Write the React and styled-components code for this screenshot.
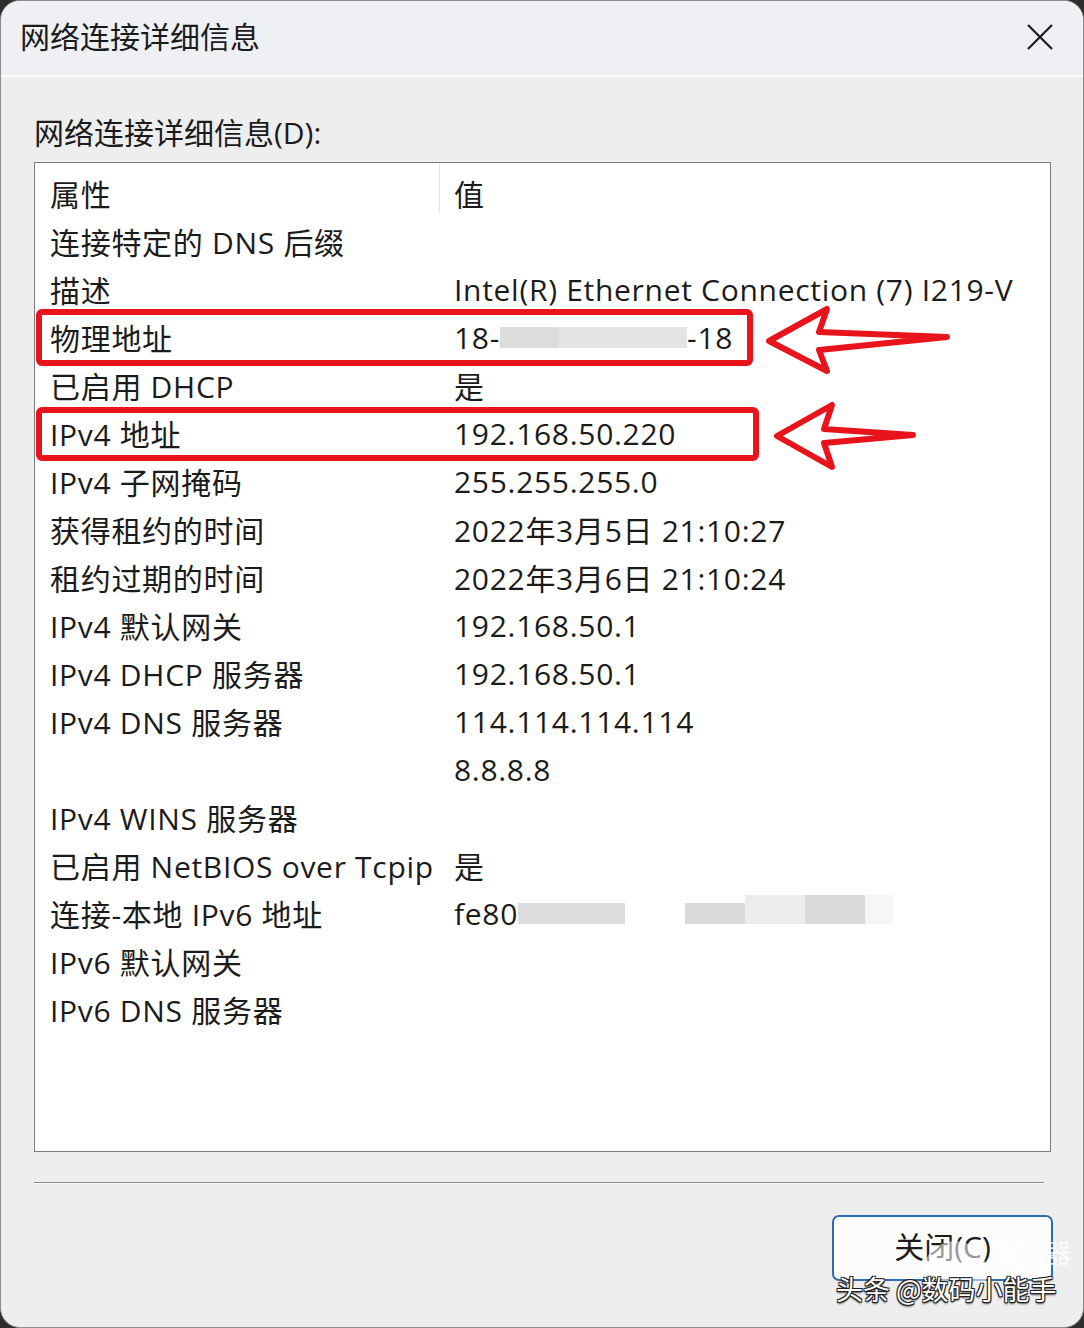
import React from 'react'
import styled, { createGlobalStyle } from 'styled-components'

const GlobalStyle = createGlobalStyle`
  body {
    margin: 0;
    background: #2e2e2e;
    font-family: "Open Sans", "Noto Sans CJK SC", sans-serif;
    color: #1b1b1b;
  }
`

const Window = styled.div`
  position: relative;
  width: 1084px;
  height: 1328px;
  box-sizing: border-box;
  background: #eeeeee;
  border: 1px solid #8c8c8c;
  border-radius: 20px;
  overflow: hidden;
  display: flex;
  flex-direction: column;
`

const TitleBar = styled.div`
  height: 74px;
  flex: none;
  background: #eef0f4;
  border-bottom: 2px solid #fbfbfb;
  display: flex;
  align-items: center;
  justify-content: space-between;
  padding: 0 30px 0 19px;
`

const Title = styled.div`
  font-size: 30px;
  line-height: 1;
  margin-top: -2px;
`

const CloseIcon = styled.svg`
  width: 26px;
  height: 26px;
  margin-top: -2px;
`

const Body = styled.div`
  flex: 1;
  display: flex;
  flex-direction: column;
  padding: 0 32px 0 33px;
`

const GroupLabel = styled.div`
  font-size: 30px;
  line-height: 48px;
  margin-top: 32px;
  margin-bottom: 5px;
`

const ListBox = styled.div`
  height: 990px;
  box-sizing: border-box;
  background: #fff;
  border: 1px solid #7b7b7b;
`

const Row = styled.div`
  display: grid;
  grid-template-columns: 405px 1fr;
  height: ${p => (p.$header ? '54px' : '48px')};
  font-size: 30px;
  letter-spacing: 0.7px;
  white-space: nowrap;
`

const Cell = styled.div`
  position: relative;
  display: flex;
  align-items: center;
  padding-left: ${p => (p.$value ? '14px' : '15px')};
  padding-top: ${p => (p.$head ? '6px' : '0')};

  ${p => p.$divider && `
    &::after {
      content: '';
      position: absolute;
      right: 0;
      top: 0;
      bottom: 4px;
      width: 1px;
      background: #e6e6e6;
    }
  `}
`

const Mask = styled.span`
  display: inline-block;
  width: ${p => p.$w}px;
  height: ${p => p.$h || 21}px;
  background: ${p => p.$c || '#dedede'};
`

const MaskGroup = styled.span`
  display: inline-flex;
  align-items: flex-end;
  margin-left: ${p => p.$gap || 0}px;
  height: 30px;
  padding-bottom: 4px;
  box-sizing: border-box;
`

const Separator = styled.div`
  height: 1px;
  background: #8a8a8a;
  border-bottom: 1px solid #fafafa;
  margin: 30px 7px 0 0;
`

const Footer = styled.div`
  display: flex;
  justify-content: flex-end;
  padding-top: 31px;
`

const Button = styled.button`
  width: 221px;
  height: 66px;
  box-sizing: border-box;
  border: 2px solid #2f6bad;
  border-radius: 7px;
  background: #fcfcfc;
  font-family: "Open Sans", "Noto Sans CJK SC", sans-serif;
  font-size: 30px;
  color: #1b1b1b;
  padding-bottom: 8px;
  margin-right: -2px;
`

const Annotations = styled.svg`
  position: absolute;
  left: 0;
  top: 0;
  width: 1084px;
  height: 1328px;
  pointer-events: none;
`

const Watermark = styled.div`
  position: absolute;
  left: 835px;
  top: 1268px;
  font-family: "Noto Sans CJK SC", sans-serif;
  font-size: 27px;
  color: #fff;
  text-shadow: -1px -1px 0 #222, 1px -1px 0 #222, -1px 1px 0 #222, 1px 1px 0 #222, 0 2px 2px #444;
`

const Ghost = styled.div`
  position: absolute;
  left: 992px;
  top: 1236px;
  font-family: "Noto Sans CJK SC", sans-serif;
  font-size: 26px;
  line-height: 30px;
  color: rgba(255, 255, 255, 0.8);
`

const Badge = styled.div`
  position: absolute;
  left: 922px;
  top: 1240px;
  width: 64px;
  height: 64px;
  border-radius: 50%;
  background: rgba(255, 255, 255, 0.55);
`

const rows = [
  ['连接特定的 DNS 后缀', ''],
  ['描述', 'Intel(R) Ethernet Connection (7) I219-V'],
  ['物理地址', 'mac'],
  ['已启用 DHCP', '是'],
  ['IPv4 地址', '192.168.50.220'],
  ['IPv4 子网掩码', '255.255.255.0'],
  ['获得租约的时间', '2022年3月5日 21:10:27'],
  ['租约过期的时间', '2022年3月6日 21:10:24'],
  ['IPv4 默认网关', '192.168.50.1'],
  ['IPv4 DHCP 服务器', '192.168.50.1'],
  ['IPv4 DNS 服务器', '114.114.114.114'],
  ['', '8.8.8.8'],
  ['IPv4 WINS 服务器', ''],
  ['已启用 NetBIOS over Tcpip', '是'],
  ['连接-本地 IPv6 地址', 'ipv6'],
  ['IPv6 默认网关', ''],
  ['IPv6 DNS 服务器', ''],
]

// blurred parts of the mac / ipv6 address
const renderValue = (v) => {
  if (v === 'mac') {
    return (
      <>
        18-
        <MaskGroup>
          <Mask $w={58} $c="#dcdcdc" />
          <Mask $w={129} $c="#e4e4e4" />
        </MaskGroup>
        -18
      </>
    )
  }
  if (v === 'ipv6') {
    return (
      <>
        fe80
        <MaskGroup>
          <Mask $w={107} $c="#dcdcdc" />
        </MaskGroup>
        <MaskGroup $gap={60}>
          <Mask $w={60} $c="#dadada" />
          <Mask $w={60} $h={29} $c="#ececec" />
          <Mask $w={60} $h={29} $c="#dadada" />
          <Mask $w={28} $h={29} $c="#f6f6f6" />
        </MaskGroup>
      </>
    )
  }
  return v
}

const App = () => {
  return (
    <>
      <GlobalStyle />
      <Window>
        <TitleBar>
          <Title>网络连接详细信息</Title>
          <CloseIcon viewBox="0 0 26 26">
            <path d="M1 1 L25 25 M25 1 L1 25" stroke="#1b1b1b" strokeWidth="2.2" fill="none" />
          </CloseIcon>
        </TitleBar>
        <Body>
          <GroupLabel>网络连接详细信息(D):</GroupLabel>
          <ListBox>
            <Row $header>
              <Cell $head $divider>属性</Cell>
              <Cell $head $value>值</Cell>
            </Row>
            {rows.map(([k, v], i) => (
              <Row key={i}>
                <Cell>{k}</Cell>
                <Cell $value>{renderValue(v)}</Cell>
              </Row>
            ))}
          </ListBox>
          <Separator />
          <Footer>
            <Button>关闭(C)</Button>
          </Footer>
        </Body>

        <Annotations viewBox="0 0 1084 1328">
          <g fill="none" stroke="#e8131b" strokeWidth="6" strokeLinejoin="round">
            <rect x="38" y="311" width="711" height="51" rx="3" />
            <rect x="38" y="409" width="717" height="48" rx="3" />
            <path d="M768 340 L826 308 L818 331 L946 336 L818 349 L826 370 Z" />
            <path d="M776 435 L831 404 L823 428 L912 434 L823 442 L831 466 Z" />
          </g>
        </Annotations>

        <Badge />
        <Ghost>路由器</Ghost>
        <Watermark>头条 @数码小能手</Watermark>
      </Window>
    </>
  )
}

export default App
